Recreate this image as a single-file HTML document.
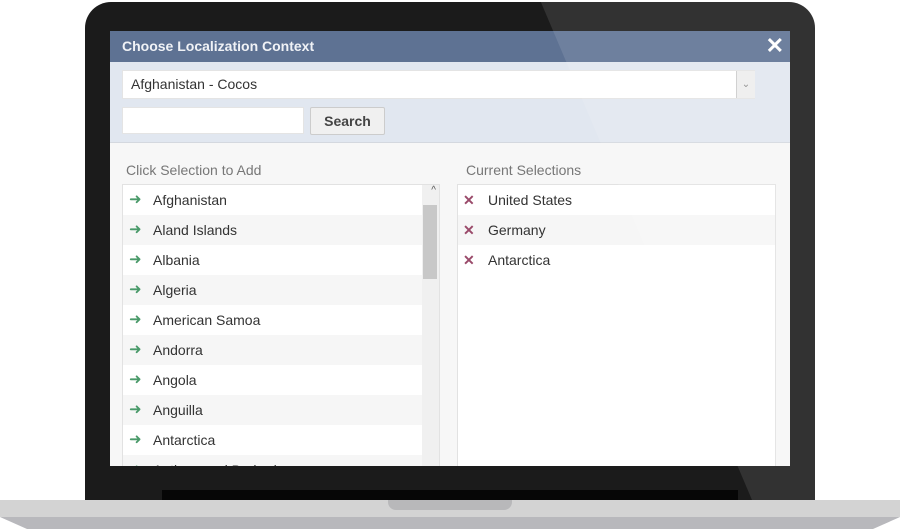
<!DOCTYPE html><html><head><style>
body{margin:0;width:900px;height:529px;background:#fff;position:relative;overflow:hidden;font-family:"Liberation Sans",sans-serif;}
.a{position:absolute;}
.row{height:30px;line-height:30px;font-size:14px;color:#333;padding-left:30px;position:relative;}
.row:nth-child(even){background:#f6f6f6;}
.g::before{content:"➜";position:absolute;left:6px;top:0;color:#4a9a6a;font-size:15px;}
.x::before{content:"✕";position:absolute;left:5px;color:#9a4a6a;font-size:14px;font-weight:bold;}
</style></head><body>
<div class="a" style="left:85px;top:2px;width:730px;height:520px;background:#1b1b1b;border-radius:26px 26px 0 0;"></div>
<div class="a" style="left:110px;top:31px;width:680px;height:435px;background:#f7f7f7;overflow:hidden;">
 <div class="a" style="left:0;top:0;width:680px;height:31px;background:#5e7293;color:#f0f2f6;font-weight:bold;font-size:14px;line-height:31px;padding-left:12px;box-sizing:border-box;">Choose Localization Context</div>
 <div class="a" style="right:6px;top:2px;color:#fff;font-size:22px;font-weight:bold;">✕</div>
 <div class="a" style="left:0;top:31px;width:680px;height:80px;background:#e1e7f0;border-bottom:1px solid #d4d8df;"></div>
 <div class="a" style="left:12px;top:39px;width:633px;height:29px;background:#fff;border:1px solid #e4e4e4;box-sizing:border-box;font-size:14px;line-height:27px;padding-left:8px;color:#333;">Afghanistan - Cocos</div>
 <div class="a" style="left:626px;top:40px;width:18px;height:27px;background:#eee;border-left:1px solid #ccc;color:#888;font-size:10px;text-align:center;line-height:27px;">⌄</div>
 <div class="a" style="left:12px;top:76px;width:182px;height:27px;background:#fff;border:1px solid #e4e4e4;box-sizing:border-box;"></div>
 <div class="a" style="left:200px;top:76px;width:75px;height:28px;background:#f0f0f0;border:1px solid #ccc;box-sizing:border-box;border-radius:2px;font-size:14px;font-weight:bold;color:#444;text-align:center;line-height:26px;">Search</div>
 <div class="a" style="left:16px;top:131px;font-size:14px;color:#777;">Click Selection to Add</div>
 <div class="a" style="left:356px;top:131px;font-size:14px;color:#777;">Current Selections</div>
 <div class="a" style="left:12px;top:153px;width:318px;height:290px;background:#fff;border:1px solid #e2e2e2;box-sizing:border-box;overflow:hidden;">
  <div class="row g">Afghanistan</div><div class="row g">Aland Islands</div><div class="row g">Albania</div><div class="row g">Algeria</div><div class="row g">American Samoa</div><div class="row g">Andorra</div><div class="row g">Angola</div><div class="row g">Anguilla</div><div class="row g">Antarctica</div><div class="row g">Antigua and Barbuda</div>
  <div class="a" style="right:0;top:0;width:17px;height:290px;background:#f0f0f0;"></div>
  <div class="a" style="right:2px;top:20px;width:14px;height:74px;background:#c8c8c8;"></div>
  <div class="a" style="right:3px;top:0;font-size:10px;color:#555;">^</div>
 </div>
 <div class="a" style="left:347px;top:153px;width:319px;height:290px;background:#fff;border:1px solid #e2e2e2;box-sizing:border-box;">
  <div class="row x" style="background:#fff">United States</div><div class="row x">Germany</div><div class="row x" style="background:#fff">Antarctica</div>
 </div>
</div>
<div class="a" style="left:162px;top:490px;width:576px;height:12px;background:#060606;"></div>
<div class="a" style="left:0;top:517px;width:900px;height:12px;background:#b8b8bc;clip-path:polygon(0 0,100% 0,97% 100%,3% 100%);"></div>
<div class="a" style="left:0;top:500px;width:900px;height:17px;background:#d3d3d3;"></div>
<div class="a" style="left:388px;top:500px;width:124px;height:10px;background:#b8b8ba;border-radius:0 0 8px 8px;"></div>
<div class="a" style="left:0;top:0;width:900px;height:500px;background:rgba(255,255,255,0.1);clip-path:polygon(540px 0,815px 0,815px 500px,752px 500px);"></div>
</body></html>
